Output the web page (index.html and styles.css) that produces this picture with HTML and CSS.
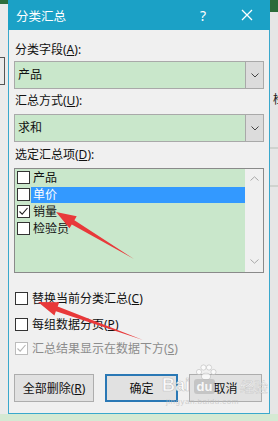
FILE: index.html
```html
<!DOCTYPE html>
<html lang="zh-CN">
<head>
<meta charset="utf-8">
<title>分类汇总</title>
<link rel="stylesheet" href="styles.css">
</head>
<body>
<div class="screen">
  <div class="side side-left"><div class="cell"></div></div>
  <div class="dialog">
    <div class="titlebar">
      <span class="title">分类汇总</span>
      <span class="help">?</span>
      <span class="close"><svg width="12" height="12" viewBox="0 0 12 12"><path d="M1 1L11 11M11 1L1 11" stroke="#fff" stroke-width="1.3" fill="none"/></svg></span>
    </div>
    <div class="content">
      <div class="field-label first">分类字段(<u>A</u>):</div>
      <div class="combo">
        <span class="combo-value">产品</span>
        <span class="combo-btn"><svg width="8" height="5" viewBox="0 0 8 5"><path d="M0.5 0.5L4 4L7.5 0.5" stroke="#444" stroke-width="1" fill="none"/></svg></span>
      </div>
      <div class="field-label">汇总方式(<u>U</u>):</div>
      <div class="combo combo-second">
        <span class="combo-value">求和</span>
        <span class="combo-btn"><svg width="8" height="5" viewBox="0 0 8 5"><path d="M0.5 0.5L4 4L7.5 0.5" stroke="#444" stroke-width="1" fill="none"/></svg></span>
      </div>
      <div class="field-label">选定汇总项(<u>D</u>):</div>
      <div class="listbox">
        <div class="list-items">
          <div class="item"><span class="cb"></span><span class="item-text">产品</span></div>
          <div class="item selected"><span class="cb"></span><span class="item-text">单价</span></div>
          <div class="item"><span class="cb"><svg width="11" height="11" viewBox="0 0 11 11"><path d="M1.5 5.5L4.2 8.2L9.5 2" stroke="#222" stroke-width="1.1" fill="none"/></svg></span><span class="item-text">销量</span></div>
          <div class="item"><span class="cb"></span><span class="item-text">检验员</span></div>
        </div>
        <div class="scrollbar">
          <svg width="9" height="5" viewBox="0 0 9 5"><path d="M0.5 4.5L4.5 0.8L8.5 4.5" stroke="#a8a8a8" stroke-width="1" fill="none"/></svg>
          <svg width="9" height="5" viewBox="0 0 9 5"><path d="M0.5 0.5L4.5 4.2L8.5 0.5" stroke="#a8a8a8" stroke-width="1" fill="none"/></svg>
        </div>
      </div>
      <div class="check-row row-one"><span class="cb"></span><span class="check-text">替换当前分类汇总(<u>C</u>)</span></div>
      <div class="check-row row-two"><span class="cb"></span><span class="check-text">每组数据分页(<u>P</u>)</span></div>
      <div class="check-row row-three disabled"><span class="cb"><svg width="11" height="11" viewBox="0 0 11 11"><path d="M1.5 5.5L4.2 8.2L9.5 2" stroke="#b5b5b5" stroke-width="1.1" fill="none"/></svg></span><span class="check-text">汇总结果显示在数据下方(<u>S</u>)</span></div>
      <div class="buttons">
        <div class="btn btn-wide">全部删除(<u>R</u>)</div>
        <div class="btn btn-default">确定</div>
        <div class="btn">取消</div>
      </div>
    </div>
  </div>
  <div class="side side-right"><span class="peek">检</span></div>

  <svg class="arrows" width="278" height="421" viewBox="0 0 278 421">
    <polygon points="56,212 76.7,216.3 74.4,220.2 134,259 71.8,224.4 69.5,228.3" fill="#e8393a"/>
    <polygon points="38,302 59.2,302.2 57.7,306.4 143,340 55.9,311.2 54.4,315.4" fill="#e8393a"/>
  </svg>

  <div class="watermark">
    <svg class="paw" width="24" height="16" viewBox="0 0 24 16">
      <circle cx="5" cy="8" r="2.6"/>
      <circle cx="9.5" cy="3.5" r="2.6"/>
      <circle cx="15" cy="3.5" r="2.6"/>
      <circle cx="19.5" cy="8" r="2.6"/>
      <ellipse cx="12" cy="12.5" rx="4.5" ry="3.3"/>
    </svg>
    <span class="wm-bai">Bai</span>
    <span class="wm-du">du</span>
    <span class="wm-jy">经验</span>
    <span class="wm-url">jingyan.baidu.com</span>
  </div>
</div>
</body>
</html>
```

FILE: styles.css
```css
html, body {
  margin: 0;
  padding: 0;
}

body {
  width: 278px;
  height: 421px;
  overflow: hidden;
  font-family: "Noto Sans", "Noto Sans CJK SC", sans-serif;
  font-size: 12px;
  color: #111;
}

.screen {
  position: relative;
  display: flex;
  align-items: flex-start;
  width: 278px;
  height: 421px;
  background: #d5e9d3;
}

.side {
  width: 8px;
  height: 414px;
  overflow: hidden;
}

.side-left {
  background: linear-gradient(#2d6e3e 0 4px, #ebebeb 4px);
}

.cell {
  width: 5px;
  height: 28px;
  margin-top: 57px;
  box-sizing: border-box;
  border: 1px solid #555;
  border-left: none;
}

.side-right {
  background: linear-gradient(#2b6b3a 0 12px, #e6e6e6 12px 147px, #cfd3cf 147px 149px, #e6e6e6 149px 185px, #cfd3cf 185px 187px, #e6e6e6 187px);
}

.peek {
  display: block;
  margin-top: 93px;
  padding-left: 3px;
  font-size: 12px;
  line-height: 14px;
  white-space: nowrap;
  color: #222;
}

.dialog {
  width: 262px;
  height: 414px;
  box-sizing: border-box;
  border: 1px solid #3aa8cc;
  border-top: none;
  background: #f0f0f0;
  display: flex;
  flex-direction: column;
}

.titlebar {
  height: 30px;
  margin: 0 -1px;
  padding-left: 8px;
  background: #1ba1c6;
  color: #fff;
  display: flex;
  align-items: center;
}

.title {
  flex: 1;
  font-size: 12.5px;
}

.help {
  width: 14px;
  margin-right: 31px;
  text-align: center;
  font-size: 14px;
}

.close {
  width: 12px;
  height: 12px;
  margin-right: 17px;
  display: flex;
}

.content {
  padding: 0 5px;
}

.field-label {
  height: 18px;
  line-height: 18px;
  padding-left: 1px;
  margin-top: 3px;
  white-space: nowrap;
}

.field-label.first {
  margin-top: 11px;
}

.combo {
  height: 28px;
  box-sizing: border-box;
  margin-top: 2px;
  border: 1px solid #a9a9a9;
  background: #c9e7cb;
  display: flex;
}

.combo-second {
  margin-top: 4px;
}

.combo-value {
  flex: 1;
  padding-left: 3px;
  line-height: 26px;
}

.combo-btn {
  width: 17px;
  border-left: 1px solid #a9a9a9;
  background: #dcdcdc;
  display: flex;
  align-items: center;
  justify-content: center;
}

.combo + .field-label {
  margin-top: 3px;
}

.combo-second + .field-label {
  margin-top: 4px;
}

.listbox {
  height: 105px;
  box-sizing: border-box;
  margin-top: 4px;
  border: 1px solid #8a8a8a;
  background: #c9e7cb;
  display: flex;
}

.list-items {
  flex: 1;
  padding-left: 2px;
}

.item {
  height: 17px;
  display: flex;
  align-items: center;
}

.cb {
  width: 13px;
  height: 13px;
  flex: none;
  box-sizing: border-box;
  border: 1px solid #333;
  background: #fff;
  display: flex;
  align-items: center;
  justify-content: center;
}

.item-text {
  flex: 1;
  height: 16px;
  margin-left: 1px;
  padding-left: 2px;
  line-height: 16px;
}

.selected .item-text {
  background: #3399ff;
  color: #fff;
}

.scrollbar {
  width: 18px;
  background: #f0f0f0;
  display: flex;
  flex-direction: column;
  justify-content: space-between;
  align-items: center;
  padding: 7px 0 8px;
  box-sizing: border-box;
}

.check-row {
  height: 18px;
  padding-left: 1px;
  display: flex;
  align-items: center;
  white-space: nowrap;
}

.check-text {
  margin-left: 4px;
}

.row-one {
  margin-top: 16px;
}

.row-two {
  margin-top: 8px;
}

.row-three {
  margin-top: 6px;
}

.disabled .cb {
  border-color: #bcbcbc;
}

.disabled .check-text {
  color: #8c8c8c;
}

.buttons {
  margin-top: 17px;
  display: flex;
  gap: 11px;
}

.btn {
  width: 73px;
  height: 28px;
  box-sizing: border-box;
  border: 1px solid #adadad;
  background: #e1e1e1;
  display: flex;
  align-items: center;
  justify-content: center;
  white-space: nowrap;
}

.btn-wide {
  width: 80px;
}

.btn-default {
  border: 2px solid #2a78b5;
}

.arrows {
  position: absolute;
  left: 0;
  top: 0;
  pointer-events: none;
}

.watermark {
  position: absolute;
  left: 0;
  top: 0;
  width: 278px;
  height: 421px;
  pointer-events: none;
}

.paw {
  position: absolute;
  left: 194px;
  top: 364px;
  fill: rgba(255, 255, 255, 0.75);
  stroke: rgba(160, 160, 160, 0.5);
  stroke-width: 0.8;
}

.wm-bai {
  position: absolute;
  left: 162px;
  top: 375px;
  font-family: "Liberation Sans", sans-serif;
  font-weight: bold;
  font-size: 18px;
  line-height: 20px;
  color: rgba(255, 255, 255, 0.85);
  -webkit-text-stroke: 0.6px rgba(150, 150, 150, 0.55);
}

.wm-du {
  position: absolute;
  left: 194px;
  top: 379px;
  width: 21px;
  height: 15px;
  border-radius: 3px;
  background: rgba(175, 175, 175, 0.55);
  font-family: "Liberation Sans", sans-serif;
  font-weight: bold;
  font-size: 13px;
  line-height: 15px;
  text-align: center;
  color: rgba(255, 255, 255, 0.9);
}

.wm-jy {
  position: absolute;
  left: 240px;
  top: 378px;
  font-size: 14px;
  line-height: 17px;
  color: rgba(255, 255, 255, 0.75);
  -webkit-text-stroke: 0.4px rgba(150, 150, 150, 0.5);
}

.wm-url {
  position: absolute;
  left: 166px;
  top: 397px;
  font-family: "Liberation Sans", sans-serif;
  font-size: 8px;
  line-height: 9px;
  letter-spacing: 0.5px;
  color: rgba(190, 190, 190, 0.7);
}
```
